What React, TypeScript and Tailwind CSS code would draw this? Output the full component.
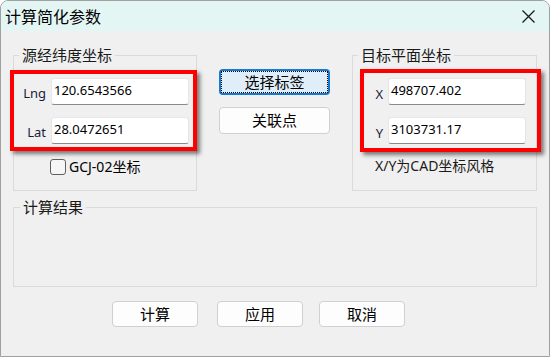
import React from "react";

const FONT = '"Noto Sans", "Noto Sans CJK SC", sans-serif';

function Field({ value }: { value: string }) {
  return (
    <input
      readOnly
      value={value}
      className="ml-[5px] w-[138px] h-[27px] bg-white border border-[#e6e6e6] border-b-[#8a8a8a] rounded-[3px] pl-[2px] pb-[3px] text-[13px] text-black outline-none"
      style={{ fontFamily: FONT }}
    />
  );
}

function Btn({ children }: { children: React.ReactNode }) {
  return (
    <div className="w-[86px] h-[26px] bg-[#fdfdfd] border border-[#d0d0d0] rounded-[4px] flex items-center justify-center text-[15px] leading-none text-black">
      {children}
    </div>
  );
}

export default function App() {
  return (
    <div
      className="w-[550px] h-[357px] bg-[#f0f0f0] border border-[#a0a0a0] rounded-t-[8px] overflow-hidden flex flex-col text-black"
      style={{ fontFamily: FONT }}
    >
      {/* title bar */}
      <div className="h-[30px] shrink-0 bg-[#e3f6f4] flex items-center justify-between pl-[4px] pr-[14px]">
        <span className="text-[16px] leading-[20px] mt-[1px]">计算简化参数</span>
        <svg width="13" height="13" viewBox="0 0 13 13" className="mt-[1px]">
          <path d="M0.5 0.5 L12.5 12.5 M12.5 0.5 L0.5 12.5" stroke="#1a1a1a" strokeWidth="1.3" fill="none" />
        </svg>
      </div>

      <div className="px-[12px] pt-[15px] flex flex-col">
        <div className="flex">
          {/* left group */}
          <div className="relative">
            <fieldset className="m-0 p-0 w-[184px] h-[145px] border border-[#dadada] min-w-0">
              <legend className="ml-[5px] px-[3px] text-[15px] leading-[18px] text-[#1a1a1a]">源经纬度坐标</legend>
              <div className="mt-[14px] flex items-center h-[27px]">
                <span className="w-[32px] text-right text-[13px] leading-[16px] mt-[3px] text-[#1c1c3a]">Lng</span>
                <Field value="120.6543566" />
              </div>
              <div className="mt-[12px] flex items-center h-[27px]">
                <span className="w-[32px] text-right text-[13px] leading-[16px] mt-[3px] text-[#1c1c3a]">Lat</span>
                <Field value="28.0472651" />
              </div>
              <div className="mt-[15px] pl-[36px] flex items-center h-[16px]">
                <div className="w-[16px] h-[16px] border border-[#5f5f5f] rounded-[3px] bg-[#f6f6f6]" />
                <span className="ml-[3px] text-[14px] leading-[16px]">GCJ-02坐标</span>
              </div>
            </fieldset>
            <div className="absolute left-[-3px] top-[24px] w-[187px] h-[81px] border-[4px] border-[#ff0000] shadow-[3px_3px_4px_rgba(0,0,0,0.5)] pointer-events-none" />
          </div>

          {/* middle buttons */}
          <div className="ml-[22px] w-[112px] pt-[23px] flex flex-col gap-[12px]">
            <div className="h-[26px] bg-[#e0eef9] border-2 border-[#1479d2] rounded-[4px]">
              <div className="h-full w-full border border-dotted border-black flex items-center justify-center text-[15px] leading-none">
                选择标签
              </div>
            </div>
            <div className="h-[27px] bg-[#fdfdfd] border border-[#d0d0d0] rounded-[4px] flex items-center justify-center text-[15px] leading-none">
              关联点
            </div>
          </div>

          {/* right group */}
          <div className="relative ml-[22px]">
            <fieldset className="m-0 p-0 w-[185px] h-[145px] border border-[#dadada] min-w-0">
              <legend className="ml-[5px] px-[3px] text-[15px] leading-[18px] text-[#1a1a1a]">目标平面坐标</legend>
              <div className="mt-[14px] flex items-center h-[27px]">
                <span className="w-[30px] text-right text-[13px] leading-[16px] mt-[4px] text-[#1c1c3a]">X</span>
                <Field value="498707.402" />
              </div>
              <div className="mt-[12px] flex items-center h-[27px]">
                <span className="w-[30px] text-right text-[13px] leading-[16px] mt-[4px] text-[#1c1c3a]">Y</span>
                <Field value="3103731.17" />
              </div>
              <div className="mt-[13px] pl-[22px] text-[14px] leading-[18px] text-[#1a1a1a]">X/Y为CAD坐标风格</div>
            </fieldset>
            <div className="absolute left-[8px] top-[23px] w-[181px] h-[83px] border-[4px] border-[#ff0000] shadow-[3px_3px_4px_rgba(0,0,0,0.5)] pointer-events-none" />
          </div>
        </div>

        {/* result group */}
        <fieldset className="m-0 p-0 mt-[7px] w-[524px] h-[89px] border border-[#dadada] min-w-0">
          <legend className="ml-[6px] px-[3px] text-[15px] leading-[18px] text-[#1a1a1a]">计算结果</legend>
        </fieldset>

        {/* bottom buttons */}
        <div className="mt-[14px] flex pl-[99px]">
          <Btn>计算</Btn>
          <div className="ml-[19px]">
            <Btn>应用</Btn>
          </div>
          <div className="ml-[16px]">
            <Btn>取消</Btn>
          </div>
        </div>
      </div>
    </div>
  );
}
